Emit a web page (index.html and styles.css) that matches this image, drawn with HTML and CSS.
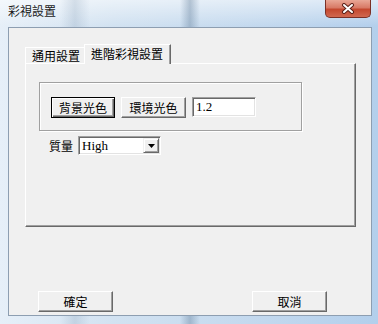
FILE: index.html
```html
<!DOCTYPE html>
<html lang="zh-Hant">
<head>
  <meta charset="UTF-8">
  <title>彩視設置</title>
  <link rel="stylesheet" href="styles.css">
</head>
<body>
  <div class="window">
    <div class="titlebar">
      <span class="title">彩視設置</span>
      <div class="close">
        <svg width="14" height="11" viewBox="0 0 14 11">
          <path d="M3 2 L11 9 M11 2 L3 9" stroke="#5a2018" stroke-width="4" stroke-linecap="round"/>
          <path d="M3 2 L11 9 M11 2 L3 9" stroke="#fff" stroke-width="2" stroke-linecap="round"/>
        </svg>
      </div>
    </div>

    <div class="client">
      <div class="tabs">
        <div class="tab">通用設置</div>
        <div class="tab active">進階彩視設置</div>
      </div>

      <div class="panel">
        <div class="group">
          <div class="btn default">背景光色</div>
          <div class="btn">環境光色</div>
          <div class="field">1.2</div>
        </div>
        <div class="quality">
          <span class="label">質量</span>
          <div class="select">
            <span class="value">High</span>
            <span class="arrow">
              <svg width="7" height="4" viewBox="0 0 7 4"><path d="M0 0 H7 L3.5 4 Z" fill="#000"/></svg>
            </span>
          </div>
        </div>
      </div>

      <div class="actions">
        <div class="btn wide">確定</div>
        <div class="btn wide">取消</div>
      </div>
    </div>
  </div>
</body>
</html>
```

FILE: styles.css
```css
body {
  margin: 0;
  font-family: "Noto Sans CJK TC", "Liberation Sans", sans-serif;
  font-size: 12px;
  color: #000;
}

.window {
  width: 378px;
  height: 324px;
  box-sizing: border-box;
  padding: 0 6px 8px 8px;
  display: flex;
  flex-direction: column;
  background:
    linear-gradient(90deg, transparent 180px, rgba(80, 110, 140, 0.35) 190px, transparent 200px),
    linear-gradient(90deg, transparent 60px, rgba(90, 120, 150, 0.18) 75px, transparent 90px),
    linear-gradient(180deg, rgba(255, 255, 255, 0.55), rgba(255, 255, 255, 0) 26px),
    linear-gradient(90deg, #e6eff8 0, #d2e2f1 30%, #c2d8ee 70%, #b3cfec 100%);
}

/* title bar */
.titlebar {
  height: 27px;
  display: flex;
  justify-content: space-between;
  align-items: flex-start;
}

.title {
  padding-top: 3px;
  line-height: 16px;
  font-size: 12px;
  color: #1b1b1b;
}

.close {
  width: 46px;
  height: 18px;
  margin-right: 1px;
  box-sizing: border-box;
  border: 1px solid #7a3026;
  border-top: none;
  border-radius: 0 0 5px 5px;
  background: linear-gradient(180deg, #e9a796 0, #d87a66 45%, #c4482f 55%, #d06850 100%);
  display: flex;
  align-items: center;
  justify-content: center;
}

/* client area */
.client {
  flex: 1;
  display: flex;
  flex-direction: column;
  background: #f0f0f0;
  border: 1px solid #8d9eb1;
}

.tabs {
  display: flex;
  align-items: flex-end;
  height: 19px;
  margin: 16px 0 0 16px;
  position: relative;
  z-index: 1;
}

.tab {
  box-sizing: border-box;
  height: 16px;
  width: 59px;
  padding-left: 6px;
  line-height: 15px;
  border-top: 1px solid #fff;
  border-left: 1px solid #fff;
  white-space: nowrap;
}

.tab.active {
  height: 20px;
  width: 87px;
  margin-bottom: -1px;
  padding-top: 1px;
  background: #f0f0f0;
  border-right: 1px solid #696969;
  box-shadow: inset -1px 0 0 #a0a0a0;
}

.panel {
  box-sizing: border-box;
  height: 164px;
  margin: 0 15px 0 16px;
  padding: 18px 0 0 13px;
  border-top: 1px solid #fff;
  border-left: 1px solid #fff;
  border-right: 1px solid #696969;
  border-bottom: 1px solid #696969;
  box-shadow: inset -1px -1px 0 #a0a0a0;
}

.group {
  box-sizing: border-box;
  width: 263px;
  height: 49px;
  padding: 14px 0 0 11px;
  display: flex;
  gap: 6px;
  align-items: flex-start;
  border: 1px solid #a0a0a0;
  box-shadow: 1px 1px 0 #fff, inset 1px 1px 0 #fff;
}

.btn {
  box-sizing: border-box;
  height: 21px;
  width: 65px;
  line-height: 19px;
  text-align: center;
  background: #f0f0f0;
  border-top: 1px solid #fff;
  border-left: 1px solid #fff;
  border-right: 1px solid #696969;
  border-bottom: 1px solid #696969;
  box-shadow: inset -1px -1px 0 #a0a0a0;
}

.btn.default {
  width: 64px;
  border: 1px solid #000;
  box-shadow: inset 1px 1px 0 #fff, inset -1px -1px 0 #696969, inset -2px -2px 0 #a0a0a0;
}

.btn.wide {
  width: 75px;
}

.field {
  box-sizing: border-box;
  width: 64px;
  height: 20px;
  padding-left: 3px;
  line-height: 17px;
  background: #fff;
  font-family: "Liberation Serif", serif;
  font-size: 13px;
  border-top: 1px solid #a0a0a0;
  border-left: 1px solid #a0a0a0;
  border-right: 1px solid #fff;
  border-bottom: 1px solid #fff;
  box-shadow: inset 1px 1px 0 #696969, inset -1px -1px 0 #e3e3e3;
}

.quality {
  display: flex;
  align-items: center;
  gap: 5px;
  margin: 5px 0 0 10px;
}

.label {
  line-height: 19px;
}

.select {
  box-sizing: border-box;
  width: 83px;
  height: 19px;
  display: flex;
  justify-content: space-between;
  background: #fff;
  border-top: 1px solid #a0a0a0;
  border-left: 1px solid #a0a0a0;
  border-right: 1px solid #fff;
  border-bottom: 1px solid #fff;
  box-shadow: inset 1px 1px 0 #696969, inset -1px -1px 0 #e3e3e3;
}

.value {
  padding-left: 3px;
  line-height: 17px;
  font-family: "Liberation Serif", serif;
  font-size: 13px;
}

.arrow {
  box-sizing: border-box;
  width: 16px;
  height: 15px;
  margin: 1px 1px 0 0;
  display: flex;
  align-items: center;
  justify-content: center;
  background: #f0f0f0;
  border-top: 1px solid #f0f0f0;
  border-left: 1px solid #f0f0f0;
  border-right: 1px solid #696969;
  border-bottom: 1px solid #696969;
  box-shadow: inset 1px 1px 0 #fff, inset -1px -1px 0 #a0a0a0;
}

.actions {
  margin-top: auto;
  padding: 0 44px 3px 29px;
  display: flex;
  justify-content: space-between;
}
```
